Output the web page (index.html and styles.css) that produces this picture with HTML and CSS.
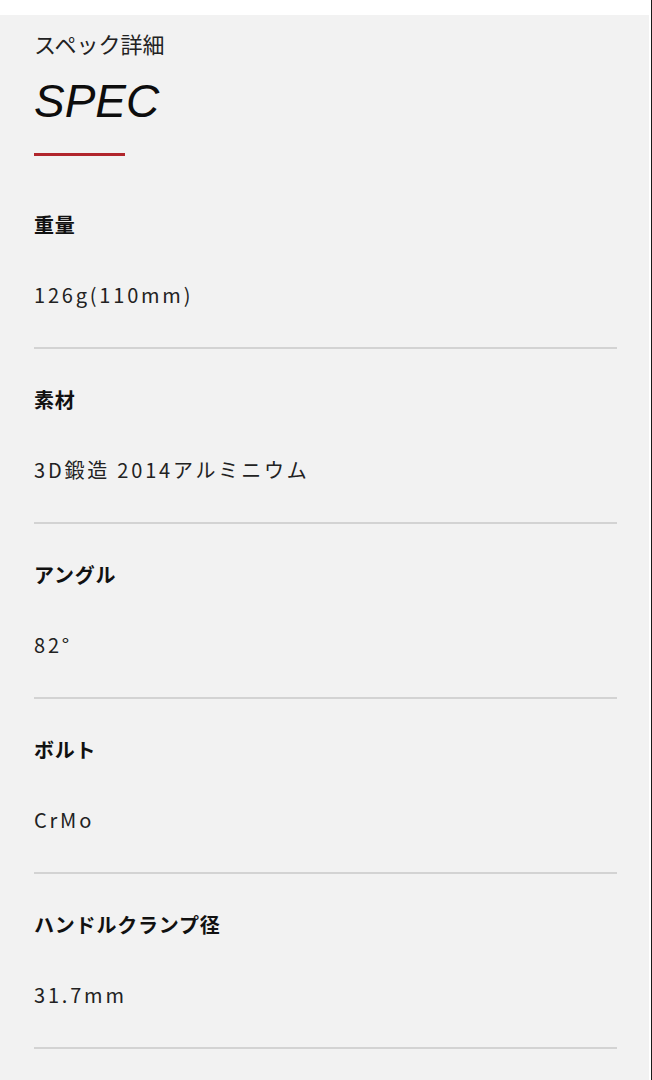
FILE: index.html
```html
<!DOCTYPE html>
<html lang="ja">
<head>
    <meta charset="UTF-8">
    <title>SPEC</title>
    <link rel="stylesheet" href="styles.css">
</head>
<body>
<div class="spec">
    <div class="spec-head">
        <p class="spec-sub">スペック詳細</p>
        <h2 class="spec-title">SPEC</h2>
        <span class="spec-bar"></span>
    </div>

    <dl class="spec-list">
        <div class="spec-item">
            <dt>重量</dt>
            <dd>126g(110mm)</dd>
        </div>
        <div class="spec-item">
            <dt>素材</dt>
            <dd>3D鍛造 2014アルミニウム</dd>
        </div>
        <div class="spec-item">
            <dt>アングル</dt>
            <dd>82°</dd>
        </div>
        <div class="spec-item">
            <dt>ボルト</dt>
            <dd>CrMo</dd>
        </div>
        <div class="spec-item">
            <dt>ハンドルクランプ径</dt>
            <dd>31.7mm</dd>
        </div>
    </dl>
</div>
</body>
</html>
```

FILE: styles.css
```css
* {
    box-sizing: border-box;
    font-family: "Noto Sans CJK JP", "Noto Sans", sans-serif;
}

html, body {
    margin: 0;
    padding: 0;
    background: #fff;
    overflow: hidden;
}

body {
    height: 1080px;
    border-right: 1px solid #1a1a1a;
    padding-top: 15px;
}

.spec {
    background: #f2f2f2;
    margin-right: 2px;
    height: 1065px;
    padding: 13px 32px 0 34px;
    color: #1a1a1a;
}

.spec-head {
    display: flex;
    flex-direction: column;
    align-items: flex-start;
    margin-bottom: 18px;
}

.spec-sub {
    margin: 0;
    font-size: 22px;
    line-height: 30px;
    color: #222;
}

.spec-title {
    margin: 20px 0 0;
    font-family: "Liberation Sans", sans-serif;
    font-style: italic;
    font-weight: normal;
    font-size: 46px;
    line-height: 46px;
    color: #0d0d0d;
}

.spec-bar {
    display: block;
    width: 91px;
    height: 3px;
    margin-top: 29px;
    background: #b1262c;
}

.spec-list {
    margin: 0;
}

.spec-item {
    padding: 36px 0 37px;
    border-bottom: 2px solid #d3d3d3;
}

.spec-item dt {
    font-size: 20px;
    line-height: 30px;
    font-weight: bold;
    letter-spacing: 0.04em;
    color: #111;
}

.spec-item dd {
    margin: 40px 0 0;
    font-size: 20px;
    line-height: 30px;
    letter-spacing: 0.14em;
    color: #222;
}
```
